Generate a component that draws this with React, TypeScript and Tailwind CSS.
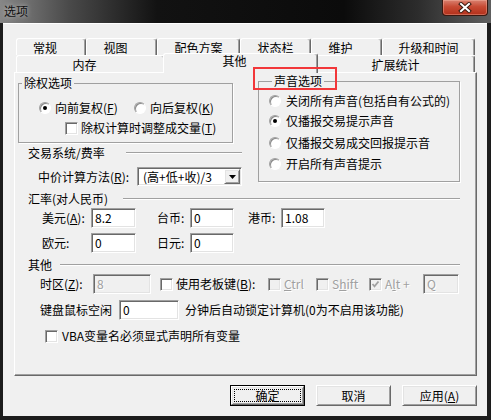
import type { ReactNode } from "react";

const sunken =
  "border border-t-[#a0a0a0] border-l-[#a0a0a0] border-r-white border-b-white shadow-[inset_1px_1px_0_#696969,inset_-1px_-1px_0_#e3e3e3]";
const raised =
  "border border-t-white border-l-white border-r-[#696969] border-b-[#696969] shadow-[inset_1px_1px_0_#e3e3e3,inset_-1px_-1px_0_#a0a0a0]";
const grayText = "text-[#a0a0a0] [text-shadow:1px_1px_0_#fff]";

function U({ children }: { children: ReactNode }) {
  return <span className="underline decoration-1 underline-offset-[1px]">{children}</span>;
}

function Radio({ on }: { on?: boolean }) {
  return (
    <span className="flex h-[12px] w-[12px] shrink-0 items-center justify-center rounded-full border border-t-[#a0a0a0] border-l-[#a0a0a0] border-r-white border-b-white bg-white shadow-[inset_1px_1px_0_#8a8a8a]">
      {on && <span className="h-[4px] w-[4px] rounded-full bg-black" />}
    </span>
  );
}

function Check({ on, off }: { on?: boolean; off?: boolean }) {
  return (
    <span
      className={`flex h-[13px] w-[13px] shrink-0 items-center justify-center ${sunken} ${
        off ? "bg-[#f0f0f0]" : "bg-white"
      }`}
    >
      {on && (
        <svg width="9" height="9" viewBox="0 0 9 9">
          <path d="M1.5 4 L3.5 6.3 L7.5 1.5" fill="none" stroke={off ? "#a0a0a0" : "#000"} strokeWidth="1.8" />
        </svg>
      )}
    </span>
  );
}

function Edit({ className, value, off }: { className: string; value: string; off?: boolean }) {
  return (
    <div
      className={`flex h-[20px] shrink-0 items-center pl-[3px] ${sunken} ${
        off ? `bg-[#f0f0f0] ${grayText}` : "bg-white"
      } ${className}`}
    >
      {value}
    </div>
  );
}

function Etched() {
  return <div className="h-0 flex-1 border-t border-b border-t-[#a0a0a0] border-b-white" />;
}

function Tab({ label, className, pad }: { label: string; className: string; pad?: boolean }) {
  return (
    <div
      className={`flex h-full shrink-0 justify-center rounded-t-[3px] border-t border-l border-r border-t-white border-l-white border-r-[#696969] bg-[#f0f0f0] pt-[2px] shadow-[inset_-1px_0_0_#a0a0a0] ${
        pad ? "pr-[12px]" : ""
      } ${className}`}
    >
      {label}
    </div>
  );
}

function Button({ children, def }: { children: ReactNode; def?: boolean }) {
  if (def) {
    return (
      <div className="flex h-[21px] w-[75px] border border-black">
        <div className={`flex flex-1 p-[2px] ${raised}`}>
          <div className="flex flex-1 items-center justify-center border border-dotted border-black">{children}</div>
        </div>
      </div>
    );
  }
  return <div className={`flex h-[21px] w-[75px] items-center justify-center ${raised}`}>{children}</div>;
}

export default function App() {
  return (
    <div className="flex h-[420px] w-[491px] flex-col overflow-hidden bg-[#1c1c1c] font-['Noto_Sans_CJK_SC',sans-serif] text-[12px] leading-[14px] text-black">
      {/* title bar */}
      <div className="flex h-[23px] shrink-0 items-start justify-between bg-[linear-gradient(90deg,#878787_0%,#4a4a4a_14%,#121212_32%,#0b0b0b_70%,#2c2c2c_85%,#5f5f5f_100%)]">
        <span className="pl-[4px] pt-[4px] text-[#111] [text-shadow:0_0_5px_rgba(255,255,255,0.6)]">选项</span>
        <div className="mr-[3px] flex h-[16px] w-[46px] items-center justify-center rounded-b-[4px] border border-t-0 border-[#3a1810] bg-[linear-gradient(180deg,#d98170_0%,#c74a33_45%,#b2301b_100%)] shadow-[inset_0_0_0_1px_rgba(255,200,180,0.35)]">
          <svg width="14" height="11" viewBox="0 0 14 11">
            <path d="M3 2 L11 9 M11 2 L3 9" stroke="#3b1a10" strokeWidth="4" strokeLinecap="square" />
            <path d="M3 2 L11 9 M11 2 L3 9" stroke="#fff" strokeWidth="2" strokeLinecap="square" />
          </svg>
        </div>
      </div>

      {/* client area */}
      <div className="ml-[3px] mr-[4px] flex h-[393px] flex-col border-t border-t-white bg-[#f0f0f0] pl-[11px] pt-[14px]">
        {/* tab headers */}
        <div className="ml-[2px] flex h-[17px]">
          <Tab label="常规" pad className="w-[70px]" />
          <Tab label="视图" pad className="w-[71px]" />
          <Tab label="配色方案" className="w-[83px]" />
          <Tab label="状态栏" className="w-[71px]" />
          <Tab label="维护" pad className="w-[71px]" />
          <Tab label="升级和时间" className="w-[93px]" />
        </div>
        <div className="ml-[2px] flex h-[17px]">
          <Tab label="内存" pad className="w-[149px]" />
          <div className="relative z-10 -mx-[2px] -mt-[2px] flex h-[20px] w-[155px] shrink-0 justify-center rounded-t-[3px] border-t border-l border-r border-t-white border-l-white border-r-[#696969] bg-[#f0f0f0] pr-[12px] shadow-[inset_-1px_0_0_#a0a0a0]">
            其他
          </div>
          <Tab label="扩展统计" className="w-[159px]" />
        </div>

        {/* tab page */}
        <div className="flex h-[304px] w-[463px] flex-col border border-t-white border-l-white border-r-[#696969] border-b-[#696969] pl-[3px] pr-[16px] shadow-[inset_-1px_-1px_0_#a0a0a0]">
          <div className="mt-[1px] flex items-start">
            {/* left column */}
            <div className="mt-[2px] flex w-[224px] shrink-0 flex-col">
              <fieldset className="w-[215px] border border-[#a0a0a0] pb-[7px] shadow-[1px_1px_0_#fff]">
                <legend className="ml-[3px] px-[2px]">除权选项</legend>
                <div className="mt-[11px] flex h-[14px] items-center pl-[20px]">
                  <div className="flex w-[95px] items-center gap-[4px]">
                    <Radio on />
                    <span>
                      向前复权(<U>F</U>)
                    </span>
                  </div>
                  <div className="flex items-center gap-[4px]">
                    <Radio />
                    <span>
                      向后复权(<U>K</U>)
                    </span>
                  </div>
                </div>
                <div className="mt-[6px] flex h-[14px] items-center gap-[3px] pl-[46px]">
                  <Check />
                  <span>
                    除权计算时调整成交量(<U>T</U>)
                  </span>
                </div>
              </fieldset>
              <div className="mt-[3px] flex h-[14px] items-center pl-[10px]">
                <span className="w-[98px] shrink-0">交易系统/费率</span>
                <Etched />
              </div>
              <div className="mt-[7px] flex h-[19px] items-center pl-[20px]">
                <span className="w-[99px] shrink-0">
                  中价计算方法(<U>R</U>):
                </span>
                <div className={`flex h-[19px] w-[105px] items-center bg-white pl-[5px] pr-[1px] ${sunken}`}>
                  <span className="flex-1">(高+低+收)/3</span>
                  <span className={`flex h-[15px] w-[16px] items-center justify-center bg-[#f0f0f0] ${raised}`}>
                    <svg width="7" height="4" viewBox="0 0 7 4">
                      <path d="M0 0 H7 L3.5 4 Z" fill="#000" />
                    </svg>
                  </span>
                </div>
              </div>
            </div>

            {/* sound options */}
            <div className="relative ml-[16px] w-[203px]">
              <fieldset className="border border-[#a0a0a0] pb-[10px] pl-[10px] shadow-[1px_1px_0_#fff]">
                <legend className="ml-[3px] px-[2px]">声音选项</legend>
                <div className="mt-[6px] flex h-[14px] items-center gap-[5px]">
                  <Radio />
                  <span>关闭所有声音(包括自有公式的)</span>
                </div>
                <div className="mt-[6px] flex h-[14px] items-center gap-[5px]">
                  <Radio on />
                  <span>仅播报交易提示声音</span>
                </div>
                <div className="mt-[8px] flex h-[14px] items-center gap-[5px]">
                  <Radio />
                  <span>仅播报交易成交回报提示音</span>
                </div>
                <div className="mt-[7px] flex h-[14px] items-center gap-[5px]">
                  <Radio />
                  <span>开启所有声音提示</span>
                </div>
              </fieldset>
              <div className="absolute -left-[5px] -top-[7px] z-20 h-[23px] w-[84px] border-2 border-[#f2373a]" />
            </div>
          </div>

          {/* exchange rates */}
          <div className="mt-[6px] flex h-[14px] items-center pl-[10px]">
            <span className="w-[95px] shrink-0">汇率(对人民币)</span>
            <Etched />
          </div>
          <div className="mt-[2px] flex h-[20px] items-center pl-[24px]">
            <span className="w-[49px] shrink-0">
              美元(<U>A</U>):
            </span>
            <Edit className="w-[45px]" value="8.2" />
            <span className="ml-[21px] w-[33px] shrink-0">台币:</span>
            <Edit className="w-[44px]" value="0" />
            <span className="ml-[14px] w-[33px] shrink-0">港币:</span>
            <Edit className="w-[44px]" value="1.08" />
          </div>
          <div className="mt-[5px] flex h-[20px] items-center pl-[24px]">
            <span className="w-[49px] shrink-0">欧元:</span>
            <Edit className="w-[45px]" value="0" />
            <span className="ml-[21px] w-[33px] shrink-0">日元:</span>
            <Edit className="w-[44px]" value="0" />
          </div>

          {/* other */}
          <div className="mt-[5px] flex h-[14px] items-center pl-[10px]">
            <span className="w-[32px] shrink-0">其他</span>
            <Etched />
          </div>
          <div className="mt-[2px] flex h-[20px] items-center pl-[22px]">
            <span className="w-[53px] shrink-0">
              时区(<U>Z</U>):
            </span>
            <Edit className="w-[58px]" value="8" off />
            <div className="ml-[9px] flex items-center gap-[3px]">
              <Check />
              <span className="w-[92px]">
                使用老板键(<U>B</U>):
              </span>
            </div>
            <div className="flex items-center gap-[3px]">
              <Check off />
              <span className={`w-[32px] ${grayText}`}>
                <U>C</U>trl
              </span>
            </div>
            <div className="flex items-center gap-[3px]">
              <Check off />
              <span className={`w-[37px] ${grayText}`}>
                S<U>h</U>ift
              </span>
            </div>
            <div className="flex items-center gap-[3px]">
              <Check on off />
              <span className={`w-[38px] ${grayText}`}>
                A<U>l</U>t +
              </span>
            </div>
            <Edit className="w-[36px]" value="Q" off />
          </div>
          <div className="mt-[6px] flex h-[20px] items-center pl-[22px]">
            <span className="w-[79px] shrink-0">键盘鼠标空闲</span>
            <Edit className="w-[60px]" value="0" />
            <span className="ml-[6px]">分钟后自动锁定计算机(0为不启用该功能)</span>
          </div>
          <div className="mt-[9px] flex h-[14px] items-center gap-[4px] pl-[27px]">
            <Check />
            <span>VBA变量名必须显式声明所有变量</span>
          </div>
        </div>

        {/* dialog buttons */}
        <div className="mt-[9px] flex justify-end gap-[11px] pr-[10px]">
          <Button def>确定</Button>
          <Button>取消</Button>
          <Button>
            应用(<U>A</U>)
          </Button>
        </div>
      </div>
    </div>
  );
}
